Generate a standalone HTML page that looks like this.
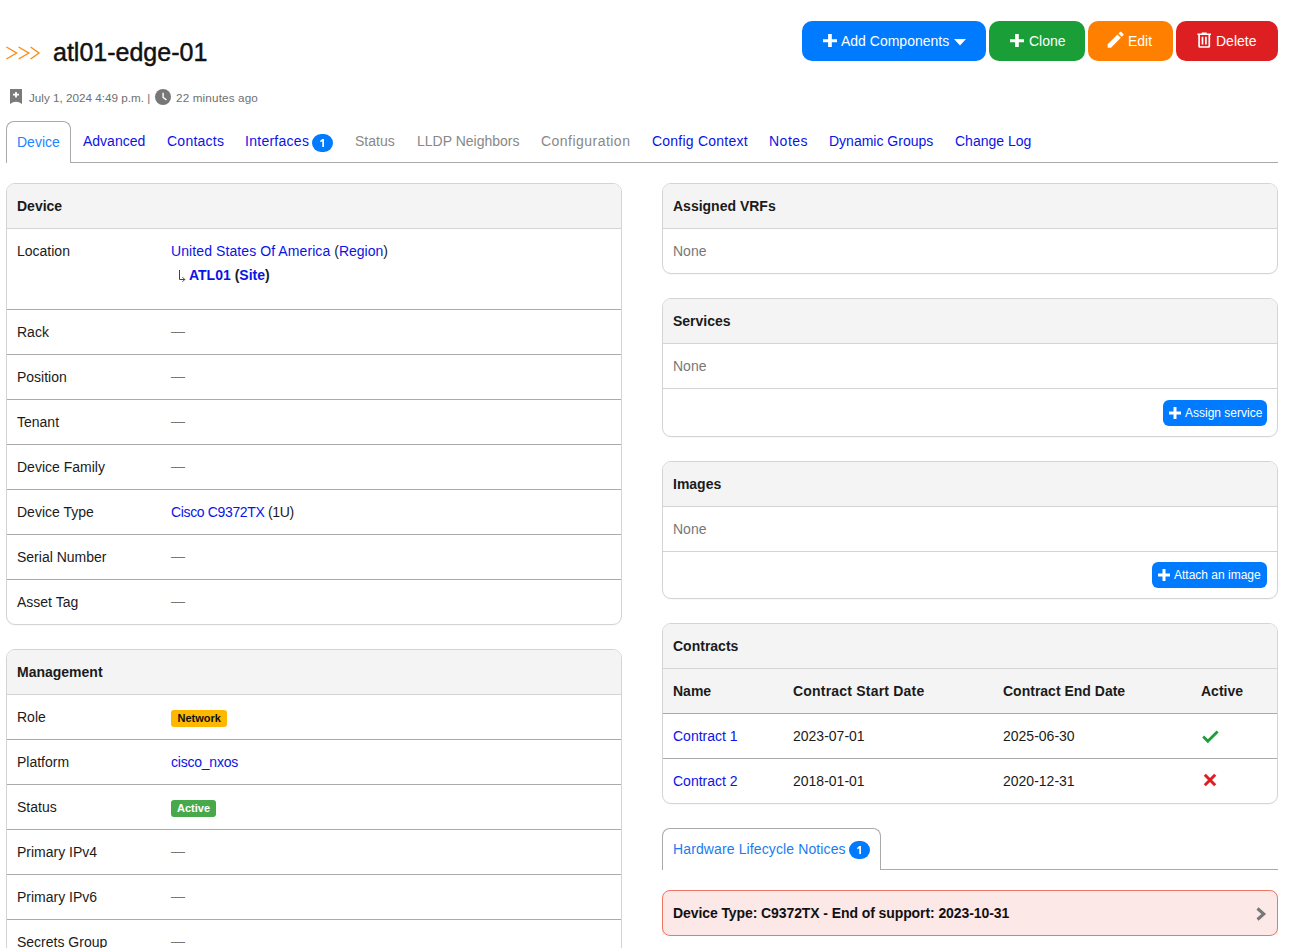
<!DOCTYPE html>
<html><head><meta charset="utf-8">
<style>
*{box-sizing:border-box}
html,body{margin:0;padding:0}
body{width:1293px;height:948px;overflow:hidden;position:relative;background:#fff;font-family:"Liberation Sans",sans-serif;font-size:14px;color:#1b1b1b}
.abs{position:absolute;white-space:nowrap}
a{color:#0a14e6;text-decoration:none}
.btn{position:absolute;top:21px;height:40px;border-radius:10px;color:#fff;font-size:14px;line-height:40px;white-space:nowrap}
.btn svg{position:absolute}
.btn span{position:absolute;top:0}
.tabs{position:absolute;left:6px;top:162px;width:1272px;height:1px;background:#aaa}
.tab{position:absolute;top:131px;line-height:20px;white-space:nowrap;color:#0a14e6}
.tab.dis{color:#888}
.tabact{position:absolute;left:6px;top:121px;width:65px;height:42px;border:1px solid #aaa;border-bottom:none;border-radius:8px 8px 0 0;background:#fff}
.badge{display:inline-block;background:#007bff;color:#fff;font-weight:bold;font-size:11px;border-radius:9px;text-align:center}
.panel{position:absolute;border:1px solid #d4d4d4;border-radius:9px;box-shadow:0 1px 1px rgba(0,0,0,0.03);background:#fff;overflow:hidden}
.ph{height:45px;background:#f4f4f4;border-bottom:1px solid #d4d4d4;font-weight:bold;padding:12px 0 0 10px;line-height:20px;white-space:nowrap}
.r{position:relative;height:45px;border-top:1px solid #aaa;padding:12px 0 0 10px;line-height:20px;white-space:nowrap}
.ph+.r{border-top:none;height:44px}
.r .v{position:absolute;left:164px;top:12px}
.dash{color:#777;margin-top:-1px}
.c{position:absolute;top:12px}
.sbtn{position:absolute;height:26px;line-height:26px;background:#007bff;color:#fff;border-radius:6px;font-size:12px}
.lbl{display:inline-block;height:17px;line-height:17px;padding:0 6px;border-radius:3px;font-size:11px;font-weight:bold;vertical-align:top}
.none{color:#777}
</style></head><body>

<!-- header -->
<svg class="abs" style="left:6px;top:46px" width="36" height="14" viewBox="0 0 36 14">
<path d="M0.4 1 L10.6 7 L0.4 13 M12.6 1 L22.8 7 L12.6 13 M24.6 1 L33 7 L24.6 13" fill="none" stroke="#ff8a14" stroke-width="1.4"/>
</svg>
<div class="abs" style="left:53px;top:40px;font-size:25px;line-height:25px;-webkit-text-stroke:0.45px #111;color:#111">atl01-edge-01</div>

<div class="btn" style="left:802px;width:184px;background:#007bff">
<svg style="left:21px;top:12.8px" width="14" height="13.4" viewBox="0 0 14 13.4"><path d="M5.1 0h3.7v5.3h5.2v3h-5.2v5.1h-3.7v-5.1h-5.1v-3h5.1z" fill="#fff"/></svg>
<span style="left:39px">Add Components</span>
<svg style="left:152px;top:18px" width="12" height="7" viewBox="0 0 12 7"><path d="M0 0h12L6 6.5z" fill="#fff"/></svg>
</div>
<div class="btn" style="left:989px;width:96px;background:#1a9e38">
<svg style="left:21px;top:12.8px" width="14" height="13.4" viewBox="0 0 14 13.4"><path d="M5.1 0h3.7v5.3h5.2v3h-5.2v5.1h-3.7v-5.1h-5.1v-3h5.1z" fill="#fff"/></svg>
<span style="left:40px">Clone</span>
</div>
<div class="btn" style="left:1088px;width:85px;background:#ff8000">
<svg style="left:17.3px;top:8.3px" width="21.3" height="21.3" viewBox="0 0 24 24"><path d="M20.71 7.04C21.1 6.65 21.1 6 20.71 5.63L18.37 3.29C18 2.9 17.35 2.9 16.96 3.29L15.12 5.12L18.87 8.87M3 17.25V21H6.75L17.81 9.93L14.06 6.18L3 17.25Z" fill="#fff"/></svg>
<span style="left:40px">Edit</span>
</div>
<div class="btn" style="left:1176px;width:102px;background:#dd1f21">
<svg style="left:17.6px;top:9.4px" width="20.4" height="20.4" viewBox="0 0 24 24"><path d="M9 3V4H4V6H5V19A2 2 0 0 0 7 21H17A2 2 0 0 0 19 19V6H20V4H15V3H9M7 6H17V19H7V6M9 8V17H11V8H9M13 8V17H15V8H13Z" fill="#fff"/></svg>
<span style="left:40px">Delete</span>
</div>

<!-- meta -->
<svg class="abs" style="left:10px;top:89px" width="12" height="15" viewBox="0 0 12 15"><path d="M0 0h12v15Q6 10.4 0 15z" fill="#7a7a7a"/><path d="M5.1 3h1.8v1.8h2.1v1.8h-2.1v1.9h-1.8v-1.9h-2.1v-1.8h2.1z" fill="#fff"/></svg>
<div class="abs" style="left:29px;top:91px;font-size:11.7px;line-height:14px;color:#707070">July 1, 2024 4:49 p.m. |</div>
<svg class="abs" style="left:155px;top:88.5px" width="16" height="16" viewBox="0 0 16 16"><circle cx="8" cy="8" r="8" fill="#777"/><path d="M7.4 3.8h1.4v4.3l3.1 2.3-0.8 1.1-3.7-2.8z" fill="#fff"/></svg>
<div class="abs" style="left:176px;top:91px;font-size:11.7px;line-height:14px;color:#707070;letter-spacing:0.15px">22 minutes ago</div>

<!-- tabs -->
<div class="tabs"></div>
<div class="tabact"></div>
<div class="tab" style="left:17px;top:132px;color:#1a85ff">Device</div>
<div class="tab" style="left:83px">Advanced</div>
<div class="tab" style="left:167px;letter-spacing:0.24px">Contacts</div>
<div class="tab" style="left:245px;letter-spacing:0.27px">Interfaces</div><span class="badge abs" style="left:312px;top:134px;width:21px;height:18px"><svg width="21" height="18" viewBox="0 0 21 18" style="display:block"><path d="M10.3 5h1.7v8.1h-1.7v-5.9l-1.6 1.1-0.7-1.2z" fill="#fff"/></svg></span>
<div class="tab dis" style="left:355px">Status</div>
<div class="tab dis" style="left:417px">LLDP Neighbors</div>
<div class="tab dis" style="left:541px;letter-spacing:0.47px">Configuration</div>
<div class="tab" style="left:652px;letter-spacing:0.23px">Config Context</div>
<div class="tab" style="left:769px;letter-spacing:0.5px">Notes</div>
<div class="tab" style="left:829px">Dynamic Groups</div>
<div class="tab" style="left:955px">Change Log</div>

<div class="panel" style="left:6px;top:183px;width:616px;height:442px">
<div class="ph">Device</div>
<div class="r" style="height:80px!important">Location<div class="v"><a style="letter-spacing:0.09px">United States Of America</a> (<a>Region</a>)<div style="margin-top:4px;padding-left:18px;position:relative"><svg style="position:absolute;left:7px;top:4.5px" width="8" height="14" viewBox="0 0 8 14"><path d="M1.5 0 V9.5 H6.8 M4.5 7.2 L6.8 9.5 L4.5 11.8" fill="none" stroke="#444" stroke-width="1"/></svg><b><a>ATL01</a> (<a>Site</a>)</b></div></div></div>
<div class="r">Rack<div class="v dash">&mdash;</div></div>
<div class="r">Position<div class="v dash">&mdash;</div></div>
<div class="r">Tenant<div class="v dash">&mdash;</div></div>
<div class="r">Device Family<div class="v dash">&mdash;</div></div>
<div class="r">Device Type<div class="v" style="letter-spacing:-0.35px"><a>Cisco C9372TX</a> (1U)</div></div>
<div class="r">Serial Number<div class="v dash">&mdash;</div></div>
<div class="r">Asset Tag<div class="v dash">&mdash;</div></div>
</div>

<div class="panel" style="left:6px;top:649px;width:616px;height:400px">
<div class="ph">Management</div>
<div class="r">Role<div class="v" style="top:15px"><span class="lbl" style="background:#ffb800;color:#111;padding:0 6.5px">Network</span></div></div>
<div class="r">Platform<div class="v" style="letter-spacing:-0.22px"><a>cisco_nxos</a></div></div>
<div class="r">Status<div class="v" style="top:15px"><span class="lbl" style="background:#48a94c;color:#fff">Active</span></div></div>
<div class="r">Primary IPv4<div class="v dash">&mdash;</div></div>
<div class="r">Primary IPv6<div class="v dash">&mdash;</div></div>
<div class="r">Secrets Group<div class="v dash">&mdash;</div></div>
</div>

<div class="panel" style="left:662px;top:183px;width:616px;height:91px">
<div class="ph">Assigned VRFs</div>
<div class="r none">None</div>
</div>

<div class="panel" style="left:662px;top:298px;width:616px;height:139px">
<div class="ph">Services</div>
<div class="r none">None</div>
<div class="r" style="height:48px;border-top-color:#d3d3d3"><div class="sbtn" style="left:500px;top:11px;width:104px"><svg style="position:absolute;left:6px;top:7px" width="12" height="12" viewBox="0 0 12 12"><path d="M4.5 0h3v4.5h4.5v3h-4.5v4.5h-3v-4.5h-4.5v-3h4.5z" fill="#fff"/></svg><span style="position:absolute;left:22px">Assign service</span></div></div>
</div>

<div class="panel" style="left:662px;top:461px;width:616px;height:138px">
<div class="ph">Images</div>
<div class="r none">None</div>
<div class="r" style="height:47px;border-top-color:#d3d3d3"><div class="sbtn" style="left:489px;top:10px;width:115px"><svg style="position:absolute;left:6px;top:7px" width="12" height="12" viewBox="0 0 12 12"><path d="M4.5 0h3v4.5h4.5v3h-4.5v4.5h-3v-4.5h-4.5v-3h4.5z" fill="#fff"/></svg><span style="position:absolute;left:22px">Attach an image</span></div></div>
</div>

<div class="panel" style="left:662px;top:623px;width:616px;height:181px">
<div class="ph">Contracts</div>
<div class="r" style="background:#f4f4f4;font-weight:bold;border-bottom:1px solid #aaa;height:45px">Name<div class="c" style="left:130px;letter-spacing:0.2px">Contract Start Date</div><div class="c" style="left:340px">Contract End Date</div><div class="c" style="left:538px">Active</div></div>
<div class="r" style="border-top:none;height:44px"><a>Contract 1</a><div class="c" style="left:130px">2023-07-01</div><div class="c" style="left:340px">2025-06-30</div><div class="c" style="left:540px"><svg width="17" height="14" viewBox="0 0 17 14" style="display:block;margin-top:3.5px;margin-left:-1px"><path d="M1.2 6.6 L5.8 11.2 L15.6 1.6" fill="none" stroke="#1a9e38" stroke-width="2.8"/></svg></div></div>
<div class="r"><a>Contract 2</a><div class="c" style="left:130px">2018-01-01</div><div class="c" style="left:340px">2020-12-31</div><div class="c" style="left:540px"><svg width="14" height="14" viewBox="0 0 14 14" style="display:block;margin-top:2px"><path d="M1.8 1.8 L12.2 12.2 M12.2 1.8 L1.8 12.2" fill="none" stroke="#dd1f21" stroke-width="3"/></svg></div></div>
</div>

<div class="abs" style="left:662px;top:869px;width:616px;height:1px;background:#aaa"></div>
<div class="abs" style="left:662px;top:828px;width:219px;height:42px;border:1px solid #aaa;border-bottom:none;border-radius:8px 8px 0 0;background:#fff"></div>
<div class="tab" style="left:673px;top:839px;color:#1a7cf0;letter-spacing:0.12px">Hardware Lifecycle Notices</div><span class="badge abs" style="left:849px;top:841px;width:21px;height:18px"><svg width="21" height="18" viewBox="0 0 21 18" style="display:block"><path d="M10.3 5h1.7v8.1h-1.7v-5.9l-1.6 1.1-0.7-1.2z" fill="#fff"/></svg></span>

<div class="abs" style="left:662px;top:890px;width:616px;height:45px;border-radius:8px 8px 0 0;background:#fde8e8"></div><div class="abs" style="left:662px;top:890px;width:616px;height:46px;border:1px solid #ef7565;border-radius:8px"></div>
<div class="abs" style="left:673px;top:903px;line-height:20px;font-weight:bold;color:#111;letter-spacing:-0.09px">Device Type: C9372TX - End of support: 2023-10-31</div>
<svg class="abs" style="left:1256px;top:907px" width="11" height="14" viewBox="0 0 11 14"><path d="M1.5 1.5 L7.8 7 L1.5 12.5" fill="none" stroke="#777" stroke-width="3"/></svg>

</body></html>
